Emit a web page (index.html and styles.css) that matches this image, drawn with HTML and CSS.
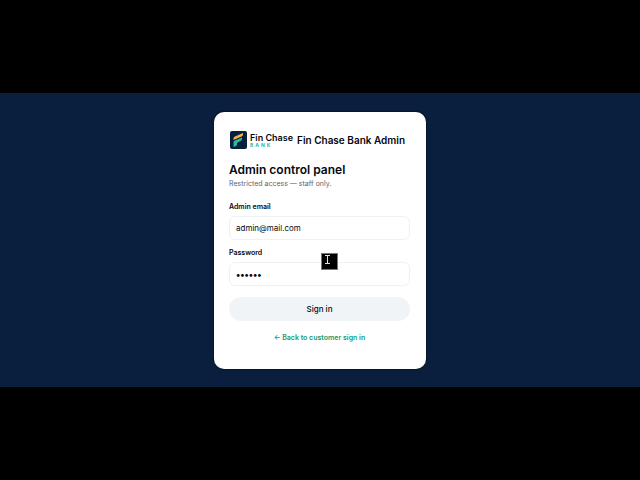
FILE: index.html
```
<!DOCTYPE html>
<html lang="en">
<head>
    <meta charset="UTF-8">
    <meta name="viewport" content="width=device-width, initial-scale=1.0">
    <title>Fin Chase Bank Admin</title>
    <link rel="stylesheet" href="styles.css">
</head>
<body>
    <main class="screen">
        <div class="card">
            <header class="brand">
                <svg class="brand-mark" viewBox="0 0 36 36" aria-hidden="true">
                    <rect x="2" width="34" height="36" rx="4" fill="#0a1f3d"/>
                    <path d="M9 18v-3q0-3 3-4l16-7v3q0 3-3 4z" fill="#f0b640"/>
                    <path d="M9 32V23q0-3 3-4l14-6v3q0 3-3 4l-7 4v3q0 2-2 3z" fill="#2db8a0"/>
                </svg>
                <div class="brand-text">
                    <span class="brand-name">Fin Chase</span>
                    <span class="brand-sub">BANK</span>
                </div>
                <span class="brand-title">Fin Chase Bank Admin</span>
            </header>

            <h1>Admin control panel</h1>
            <p class="lead">Restricted access — staff only.</p>

            <form class="form">
                <div class="field">
                    <label for="email">Admin email</label>
                    <input type="email" id="email" value="admin@mail.com">
                </div>
                <div class="field">
                    <label for="password">Password</label>
                    <input type="password" id="password" class="secret" value="secret">
                    <!-- text cursor over the field -->
                    <svg class="cursor" viewBox="0 0 17 17" aria-hidden="true">
                        <rect x="0.500" y="0.500" width="16" height="16" fill="#000" stroke="#777"/>
                        <path d="M4 2.500h5M4 10.500h5M6.500 3v7" stroke="#e0e0e0" fill="none"/>
                    </svg>
                </div>
                <button type="submit" class="btn">Sign in</button>
            </form>

            <a href="#" class="back">← Back to customer sign in</a>
        </div>
    </main>
</body>
</html>
```

FILE: styles.css
```
* {
    box-sizing: border-box;
}
body {
    font-family: Inter, "Liberation Sans", sans-serif;
    margin: 0;
    min-height: 100vh;
    display: flex;
    flex-direction: column;
    justify-content: center;
    background: #000;
    color: #05080f;
}
.screen {
    display: flex;
    justify-content: center;
    padding: 19px 16px 18px;
    background: #0a1f3d;
}
.card {
    width: 100%;
    max-width: 212px;
    padding: 19px 16px 26px 15px;
    background: #fff;
    border-radius: 10px;
    box-shadow: 0 0 2px #000;
}
.brand {
    display: flex;
    align-items: center;
    margin-bottom: 13px;
}
.brand-mark {
    width: 18px;
    height: 18px;
    flex: none;
}
.brand-text {
    display: flex;
    flex-direction: column;
    margin-left: 3px;
    white-space: nowrap;
}
.brand-name {
    font-size: 9px;
    font-weight: 600;
    line-height: 9px;
}
.brand-sub {
    font-size: 5px;
    font-weight: 700;
    line-height: 6px;
    letter-spacing: 2px;
    color: #2db8a0;
}
.brand-title {
    margin-left: 4px;
    font-size: 10px;
    font-weight: 600;
    line-height: 18px;
    white-space: nowrap;
}
h1 {
    margin: 0 0 1px;
    font-size: 12px;
    font-weight: 600;
    line-height: 16px;
}
.lead {
    margin: 0 0 13px;
    font-size: 7px;
    line-height: 10px;
    color: #5b6472;
}
.form {
    display: flex;
    flex-direction: column;
    gap: 8px;
}
.field {
    position: relative;
    display: flex;
    flex-direction: column;
    gap: 4px;
}
.field label {
    font-size: 7px;
    font-weight: 600;
    line-height: 10px;
}
.field input {
    width: 100%;
    height: 24px;
    padding: 0 6px;
    border: 1px solid #eff1f3;
    border-radius: 6px;
    background: #fff;
    color: #05080f;
    font-family: inherit;
    font-size: 8px;
    outline: none;
}
.field .secret {
    font-size: 9px;
    font-weight: 700;
}
.cursor {
    position: absolute;
    top: 5px;
    left: 92px;
    width: 17px;
    height: 17px;
}
.btn {
    height: 24px;
    margin-top: 3px;
    border: none;
    border-radius: 12px;
    background: #f1f4f7;
    color: #05080f;
    font-family: inherit;
    font-size: 8px;
    font-weight: 500;
    cursor: pointer;
}
.btn:hover {
    background: #e6eaef;
}
.back {
    display: block;
    margin-top: 12px;
    font-size: 7px;
    font-weight: 600;
    line-height: 10px;
    text-align: center;
    text-decoration: none;
    color: #169b6c;
}
```
